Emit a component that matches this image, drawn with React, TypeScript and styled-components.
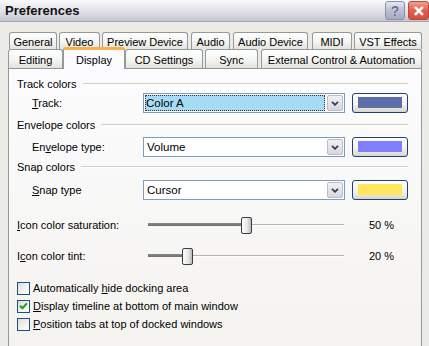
import React from 'react';
import styled, { createGlobalStyle } from 'styled-components';

const Global = createGlobalStyle`
  html, body { margin: 0; padding: 0; background: #ecebe8; }
  body { font-family: "Liberation Sans", Arial, sans-serif; }
`;

const Window = styled.div`
  width: 429px;
  height: 346px;
  overflow: hidden;
  background: #ecebe8;
  font-size: 11px;
  color: #000;
  display: flex;
  flex-direction: column;
`;

const TitleBar = styled.div`
  height: 22px;
  flex: none;
  display: flex;
  align-items: center;
  padding-left: 5px;
  background: linear-gradient(#fbfbfc 0%, #e9e9ef 35%, #d6d6df 75%, #c4c4cf 100%);
  border-bottom: 1px solid #a3a3b0;
  box-sizing: border-box;
`;

const Title = styled.div`
  flex: 1;
  font-size: 13px;
  font-weight: bold;
  color: #111;
`;

const CaptionButton = styled.div<{ $close?: boolean }>`
  width: ${(p) => (p.$close ? 21 : 20)}px;
  height: 19px;
  flex: none;
  margin-left: 3px;
  box-sizing: border-box;
  border: 1px solid ${(p) => (p.$close ? '#b34a3c' : '#8a8fa8')};
  border-radius: 3px;
  background: ${(p) =>
    p.$close
      ? 'linear-gradient(#f0a090, #e0604c 50%, #d4503e)'
      : 'linear-gradient(#e6e8f2, #b9bed4 50%, #a5abc6)'};
  display: flex;
  align-items: center;
  justify-content: center;
  font-size: 14px;
  font-weight: bold;
  color: ${(p) => (p.$close ? '#fff' : '#6b6f83')};
  text-shadow: 0 0 1px #fff;
`;

const Body = styled.div`
  flex: 1;
  display: flex;
  flex-direction: column;
  padding: 10px 0 0 8px;
`;

const TabRow = styled.div<{ $h: number }>`
  display: flex;
  align-items: flex-end;
  height: ${(p) => p.$h}px;
  position: relative;
  z-index: 1;
`;

const Tab = styled.div<{ $w: number; $gap: number; $active?: boolean }>`
  box-sizing: border-box;
  width: ${(p) => p.$w}px;
  margin-left: ${(p) => p.$gap}px;
  height: ${(p) => (p.$active ? 'calc(100% + 3px)' : '100%')};
  margin-bottom: ${(p) => (p.$active ? '-1px' : '0')};
  border: 1px solid #919b9c;
  border-bottom: none;
  border-radius: 3px 3px 0 0;
  background: ${(p) =>
    p.$active ? '#fcfcfe' : 'linear-gradient(#ffffff, #f3f3f0 60%, #e3e2dc)'};
  border-top: ${(p) => (p.$active ? '3px solid #f7b148' : '1px solid #919b9c')};
  display: flex;
  align-items: center;
  justify-content: center;
  white-space: nowrap;
  padding-top: ${(p) => (p.$active ? '0' : '1px')};
`;

const Panel = styled.div`
  width: 414px;
  flex: 1;
  box-sizing: border-box;
  border: 1px solid #919b9c;
  border-bottom: none;
  background: linear-gradient(#fcfcfe, #f4f3ef);
  display: flex;
  flex-direction: column;
  padding: 0 13px 0 8px;
`;

const GroupHeader = styled.div<{ $mt: number }>`
  display: flex;
  align-items: center;
  height: 13px;
  margin-top: ${(p) => p.$mt}px;
  &::after {
    content: '';
    flex: 1;
    margin-left: 6px;
    border-top: 1px solid #d0d0bf;
    border-bottom: 1px solid #fff;
    height: 0;
  }
`;

const FormRow = styled.div<{ $mt: number }>`
  display: flex;
  align-items: center;
  height: 20px;
  margin-top: ${(p) => p.$mt}px;
`;

const FieldLabel = styled.div`
  width: 111px;
  padding-left: 15px;
  flex: none;
`;

const Combo = styled.div`
  width: 206px;
  height: 20px;
  box-sizing: border-box;
  border: 1px solid #7f9db9;
  background: #fff;
  display: flex;
  align-items: center;
  padding: 1px;
`;

const ComboText = styled.div<{ $focused?: boolean }>`
  flex: 1;
  height: 100%;
  box-sizing: border-box;
  display: flex;
  align-items: center;
  padding-left: ${(p) => (p.$focused ? '1px' : '2px')};
  margin-right: 2px;
  background: ${(p) => (p.$focused ? '#a6dbf6' : 'transparent')};
  outline: ${(p) => (p.$focused ? '1px dotted #333' : 'none')};
  outline-offset: -1px;
  font-size: 11.5px;
`;

const ComboButton = styled.div`
  width: 16px;
  height: 16px;
  flex: none;
  box-sizing: border-box;
  border: 1px solid #b8bccb;
  border-radius: 2px;
  background: linear-gradient(#f1f1f5, #d6d7e1);
  display: flex;
  align-items: center;
  justify-content: center;
`;

const ColorButton = styled.div`
  width: 57px;
  height: 20px;
  margin-left: 7px;
  box-sizing: border-box;
  border: 1px solid #1f3f78;
  border-radius: 3px;
  background: linear-gradient(#ffffff, #f2f1ec 60%, #d8d5cb);
  padding: 3px 5px 0;
`;

const Swatch = styled.div<{ $color: string }>`
  height: 11px;
  background: ${(p) => p.$color};
`;

const SliderRow = styled.div<{ $mt: number }>`
  display: flex;
  align-items: center;
  height: 20px;
  margin-top: ${(p) => p.$mt}px;
`;

const SliderLabel = styled.div`
  width: 131px;
  flex: none;
`;

const Track = styled.div`
  width: 196px;
  height: 20px;
  flex: none;
  position: relative;
  &::before {
    content: '';
    position: absolute;
    left: 0;
    right: 0;
    top: 9px;
    height: 1px;
    background: #b5b4b0;
    border-bottom: 1px solid #fff;
  }
`;

const Fill = styled.div`
  position: absolute;
  left: 0;
  top: 8px;
  height: 3px;
  background: linear-gradient(#8a8a88, #6e6e6c);
`;

const Thumb = styled.div`
  position: absolute;
  top: 2px;
  width: 11px;
  height: 17px;
  margin-left: -5px;
  box-sizing: border-box;
  border: 1px solid #3c3c3c;
  border-radius: 2px;
  background: linear-gradient(90deg, #fff, #e6e6e6 60%, #b8b8b8);
`;

const SliderValue = styled.div`
  margin-left: 25px;
`;

const CheckRow = styled.label<{ $mt: number }>`
  display: flex;
  align-items: center;
  height: 18px;
  margin-top: ${(p) => p.$mt}px;
`;

const Box = styled.span`
  width: 13px;
  height: 13px;
  box-sizing: border-box;
  border: 1px solid #1c5180;
  background: linear-gradient(135deg, #dcdcd7, #f4f4f0 60%, #fff);
  margin-right: 3px;
  display: flex;
  align-items: center;
  justify-content: center;
`;

const Chevron = () => (
  <svg width="8" height="5" viewBox="0 0 8 5">
    <path d="M1 0.8 L4 3.8 L7 0.8" fill="none" stroke="#3a3d4a" strokeWidth="1.8" />
  </svg>
);

const Check = () => (
  <svg width="9" height="8" viewBox="0 0 9 8">
    <path d="M1 3.8 L3.4 6.2 L8 1.2" fill="none" stroke="#21a121" strokeWidth="2" />
  </svg>
);

const Hot = styled.span`
  text-decoration: underline;
`;

const row1 = [
  { label: 'General', w: 48, gap: 1 },
  { label: 'Video', w: 41, gap: 2 },
  { label: 'Preview Device', w: 86, gap: 2 },
  { label: 'Audio', w: 39, gap: 3 },
  { label: 'Audio Device', w: 75, gap: 3 },
  { label: 'MIDI', w: 40, gap: 4 },
  { label: 'VST Effects', w: 68, gap: 2 },
];

const row2 = [
  { label: 'Editing', w: 55, gap: 0 },
  { label: 'Display', w: 62, gap: 0, active: true },
  { label: 'CD Settings', w: 78, gap: 0 },
  { label: 'Sync', w: 53, gap: 2 },
  { label: 'External Control & Automation', w: 161, gap: 3 },
];

function Slider({ label, value }: { label: React.ReactNode; value: number }) {
  const pos = (value / 100) * 196;
  return (
    <>
      <SliderLabel>{label}</SliderLabel>
      <Track>
        <Fill style={{ width: pos }} />
        <Thumb style={{ left: pos }} />
      </Track>
      <SliderValue>{value} %</SliderValue>
    </>
  );
}

export default function App() {
  return (
    <Window>
      <Global />
      <TitleBar>
        <Title>Preferences</Title>
        <CaptionButton>?</CaptionButton>
        <CaptionButton $close>✕</CaptionButton>
      </TitleBar>
      <Body>
        <TabRow $h={17}>
          {row1.map((t) => (
            <Tab key={t.label} $w={t.w} $gap={t.gap}>{t.label}</Tab>
          ))}
        </TabRow>
        <TabRow $h={19}>
          {row2.map((t) => (
            <Tab key={t.label} $w={t.w} $gap={t.gap} $active={t.active}>{t.label}</Tab>
          ))}
        </TabRow>
        <Panel>
          <GroupHeader $mt={8}>Track colors</GroupHeader>
          <FormRow $mt={3}>
            <FieldLabel><Hot>T</Hot>rack:</FieldLabel>
            <Combo>
              <ComboText $focused>Color A</ComboText>
              <ComboButton><Chevron /></ComboButton>
            </Combo>
            <ColorButton><Swatch $color="#5b6ea8" /></ColorButton>
          </FormRow>

          <GroupHeader $mt={5}>Envelope colors</GroupHeader>
          <FormRow $mt={6}>
            <FieldLabel>En<Hot>v</Hot>elope type:</FieldLabel>
            <Combo>
              <ComboText>Volume</ComboText>
              <ComboButton><Chevron /></ComboButton>
            </Combo>
            <ColorButton><Swatch $color="#8080ff" /></ColorButton>
          </FormRow>

          <GroupHeader $mt={3}>Snap colors</GroupHeader>
          <FormRow $mt={7}>
            <FieldLabel><Hot>S</Hot>nap type</FieldLabel>
            <Combo>
              <ComboText>Cursor</ComboText>
              <ComboButton><Chevron /></ComboButton>
            </Combo>
            <ColorButton><Swatch $color="#ffe65c" /></ColorButton>
          </FormRow>

          <SliderRow $mt={15}>
            <Slider label={<><Hot>I</Hot>con color saturation:</>} value={50} />
          </SliderRow>
          <SliderRow $mt={11}>
            <Slider label={<>I<Hot>c</Hot>on color tint:</>} value={20} />
          </SliderRow>

          <CheckRow $mt={13}>
            <Box />
            <span>Automatically <Hot>h</Hot>ide docking area</span>
          </CheckRow>
          <CheckRow $mt={0}>
            <Box><Check /></Box>
            <span><Hot>D</Hot>isplay timeline at bottom of main window</span>
          </CheckRow>
          <CheckRow $mt={0}>
            <Box />
            <span><Hot>P</Hot>osition tabs at top of docked windows</span>
          </CheckRow>
        </Panel>
      </Body>
    </Window>
  );
}
